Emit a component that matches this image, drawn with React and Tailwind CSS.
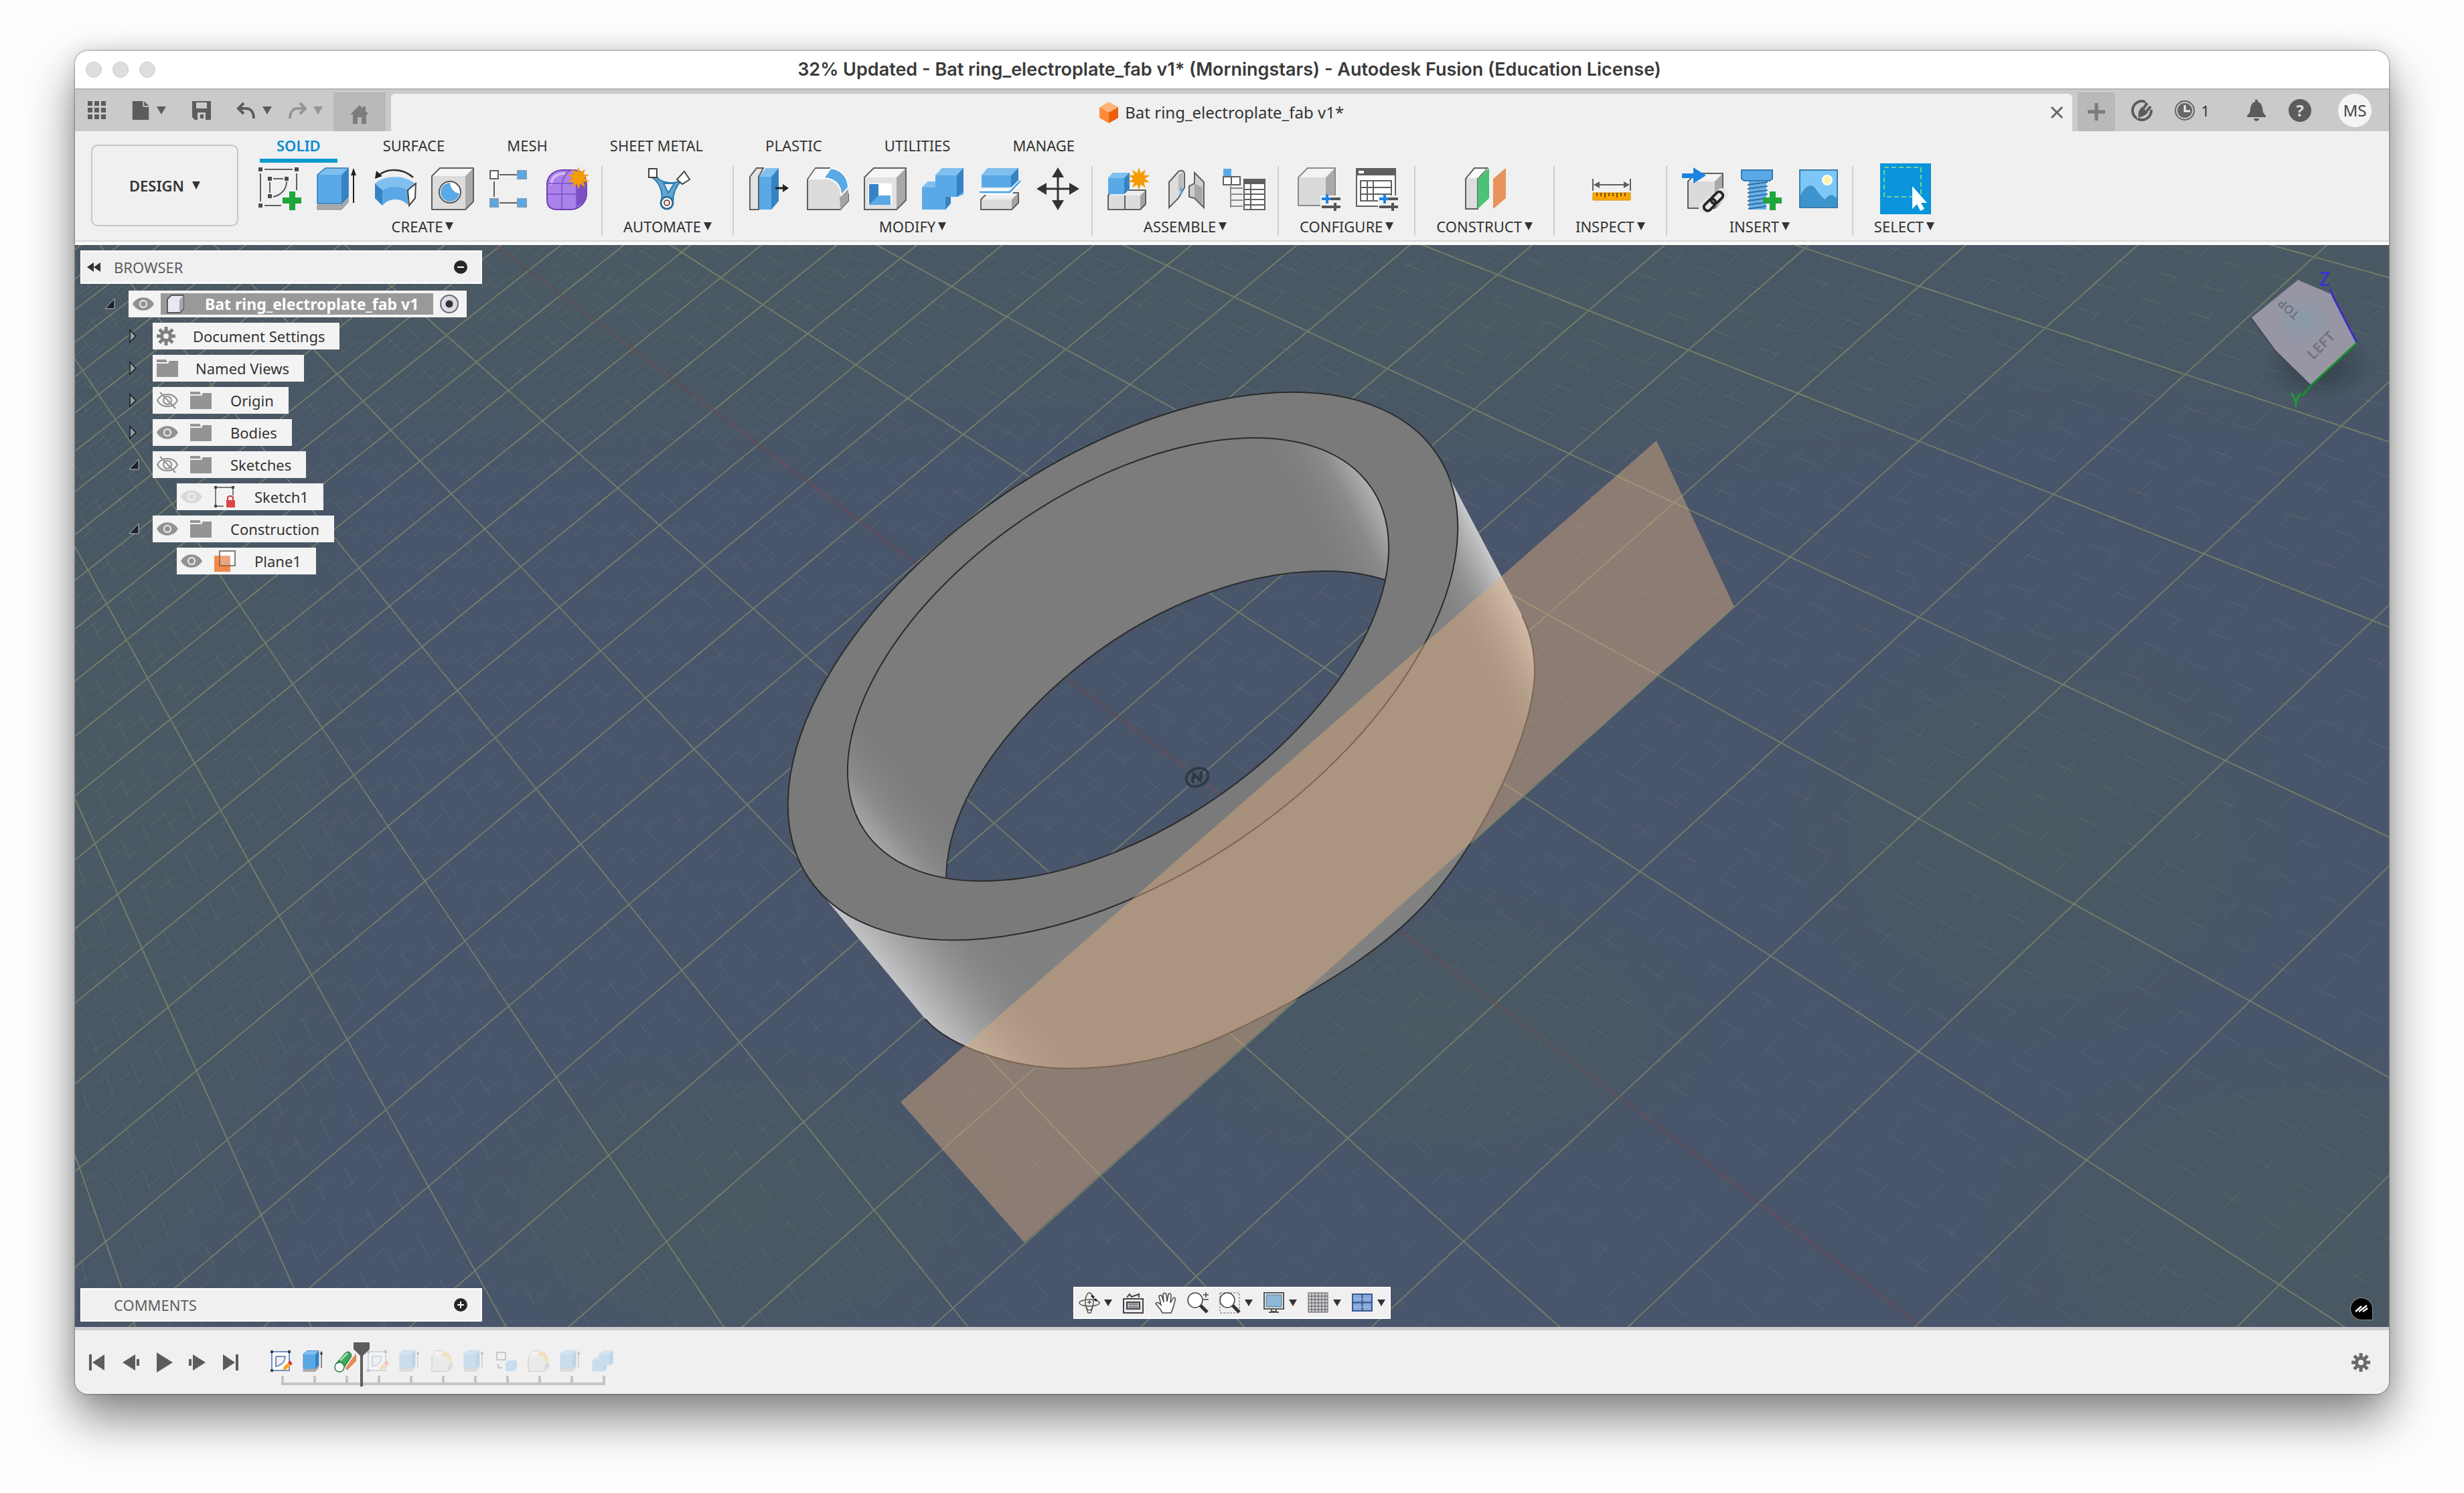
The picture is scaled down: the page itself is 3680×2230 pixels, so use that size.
import clsx from 'clsx';

const EDGE = '#5f5f5f';
const BLUE = '#5aa9e6';
const BLUE_TOP = '#7fc0ef';
const BLUE_SIDE = '#3583c4';

function Icon({ children, className = 'size-16', box = 64 }) {
  return (
    <svg viewBox={`0 0 ${box} ${box}`} className={clsx('block shrink-0 overflow-visible', className)} fill="none" aria-hidden="true">
      {children}
    </svg>
  );
}

function Caret({ className = 'w-3 h-3' }) {
  return (
    <svg viewBox="0 0 12 12" className={clsx('shrink-0', className)} preserveAspectRatio="none" aria-hidden="true">
      <path d="M0 0H12L6 12Z" fill="currentColor" />
    </svg>
  );
}

function Burst({ x, y, r, fill = '#f59c00' }) {
  const points = Array.from({ length: 20 }, (_, i) => {
    const a = (i * Math.PI) / 10 - Math.PI / 2;
    const d = i % 2 ? r * 0.52 : r;
    return `${(x + d * Math.cos(a)).toFixed(1)},${(y + d * Math.sin(a)).toFixed(1)}`;
  });
  return <polygon points={points.join(' ')} fill={fill} />;
}

const Box = ({ x = 0, y = 0, w, h, d = 12, front, top, side, edge = EDGE }) => (
  <g stroke={edge} strokeWidth="2" strokeLinejoin="round">
    <path d={`M${x} ${y + d}L${x + d} ${y}H${x + w}L${x + w - d} ${y + d}Z`} fill={top} stroke="none" />
    <path d={`M${x + w - d} ${y + d}L${x + w} ${y}V${y + h - d}L${x + w - d} ${y + h}Z`} fill={side} stroke="none" />
    <path d={`M${x} ${y + d}H${x + w - d}V${y + h}H${x}Z`} fill={front} stroke="none" />
    <path d={`M${x} ${y + d}L${x + d} ${y}H${x + w}V${y + h - d}L${x + w - d} ${y + h}H${x}Z`} />
  </g>
);

const GreenPlus = ({ x, y }) => <path d={`M${x - 4} ${y - 14}h9v9h9v9h-9v10h-9v-10h-10v-9h10z`} fill="#1ea63c" />;

/* ---------- ribbon icons ---------- */

const SketchIcon = ({ className }) => (
  <Icon className={className}>
    <g stroke={EDGE} strokeWidth="2">
      <path d="M9 3H51M3 9V51M57 9V34M9 57H34M22 17H37M17 22V38M42 21C42 32 35 41 22 44" />
    </g>
    <path d="M0 0h6v6H0zM54 0h6v6h-6zM0 54h6v6H0zM14 14h6v6h-6zM39 14h6v6h-6zM14 40h6v6h-6z" fill="#4b4b4b" />
    <GreenPlus x={50} y={50} />
  </Icon>
);

const ExtrudeIcon = ({ className }) => (
  <Icon className={className}>
    <path d="M2 56H38L48 44V52L38 63H2Z" fill="#a9a9a9" stroke="#8a8a8a" />
    <path d="M2 11L14 1H48L38 11Z" fill={BLUE_TOP} />
    <path d="M38 11L48 1V43L38 54Z" fill={BLUE_SIDE} />
    <path d="M2 11H38V54H2Z" fill={BLUE} />
    <path d="M2 11L14 1H48V43L38 54H2Z" stroke="#2f76b5" strokeWidth="1.5" />
    <path d="M56 10V53" stroke="#222" strokeWidth="2" />
    <path d="M56 1L60 12H52Z" fill="#222" />
  </Icon>
);

const RevolveIcon = () => (
  <Icon>
    <path d="M5 14C18 1 42 0 59 15" stroke="#333" strokeWidth="2.5" />
    <path d="M2 17L4 5L13 13Z" fill="#222" />
    <path d="M2 24C16 11 46 11 62 24L51 34C40 27 24 27 13 34Z" fill={BLUE_TOP} />
    <path d="M2 24L13 34V57L2 46Z" fill={BLUE_SIDE} />
    <path d="M13 34C24 27 40 27 51 34V56C40 45 24 45 13 57Z" fill={BLUE} />
    <path d="M51 34L63 24L62 46L53 57Z" fill="#fff" stroke="#444" strokeWidth="2" />
  </Icon>
);

const HoleIcon = () => (
  <Icon>
    <Box x={1} y={1} w={62} h={62} front="#dcdcdc" top="#f4f4f4" side="#aaa" />
    <circle cx="28" cy="37" r="16" fill="#fff" stroke="#555" strokeWidth="2" />
    <path d="M28 23A14 14 0 1 0 42 39A17 17 0 0 1 28 23Z" fill={BLUE} />
  </Icon>
);

const PatternIcon = () => (
  <Icon>
    <path d="M16 11H42M8 21V44M16 53H42" stroke={EDGE} strokeWidth="2" />
    <path d="M2 5h12v12H2z" fill="#fff" stroke={EDGE} strokeWidth="2" />
    <path d="M43 5h13v12H43zM2 47h12v12H2zM43 47h13v12H43z" fill={BLUE} stroke="#7d9db8" strokeWidth="2" />
  </Icon>
);

const FormIcon = () => (
  <Icon>
    <path d="M1 24C2 12 12 4 24 4H40C54 4 60 14 60 28V42C58 54 48 63 36 63H16C6 63 1 58 1 48Z" fill="#ab82ea" stroke="#6c3fb4" strokeWidth="2" />
    <path d="M45 24C52 22 58 18 59 16L60 42C58 50 52 56 46 58Z" fill="#7c4fc4" />
    <path d="M7 26C8 14 16 9 28 9" stroke="#d2b8f5" strokeWidth="4" />
    <path d="M23 24V62M2 40H46L60 34M3 24H45V60M24 24C24 16 30 8 34 5" stroke="#7a4dc4" strokeWidth="1.5" />
    <Burst x={48} y={16} r={17} />
  </Icon>
);

const AutomateIcon = () => (
  <Icon>
    <path d="M14 14C20 24 42 26 52 18C40 30 38 42 38 52A9 9 0 0 1 20 52C24 42 20 24 8 16Z" fill="#5fa6d2" stroke="#2b7cb0" strokeWidth="2" />
    <path d="M24 24H40L31 38Z" fill="#f0f0f0" stroke="#2b7cb0" strokeWidth="2" />
    <path d="M2 2h12v13H2z" fill="#fff" stroke="#444" strokeWidth="2" />
    <path d="M55 6L63 18L52 25L44 18Z" fill="#fff" stroke="#444" strokeWidth="2" />
    <circle cx="29" cy="53" r="9" fill="#fff" stroke="#2b6f9c" strokeWidth="3" />
    <circle cx="29" cy="53" r="4" stroke="#8a4a3a" strokeWidth="2" />
  </Icon>
);

const PressPullIcon = () => (
  <Icon>
    <path d="M2 14L12 1H22L15 14V63H2Z" fill="#e3e3e3" stroke={EDGE} strokeWidth="2" />
    <path d="M16 14L26 1H45V50L34 63H16Z" fill={BLUE} />
    <path d="M34 14L45 1V50L34 63Z" fill={BLUE_SIDE} />
    <path d="M16 14L26 1H45L34 14Z" fill={BLUE_TOP} />
    <path d="M40 31H54" stroke="#222" strokeWidth="3" />
    <path d="M60 31L51 25V37Z" fill="#222" />
  </Icon>
);

const FilletIcon = ({ className, accent = BLUE }) => (
  <Icon className={className}>
    <path d="M2 18L14 1H38L63 40V50L51 63H2Z" fill="#dcdcdc" stroke={EDGE} strokeWidth="2" />
    <path d="M50 42L63 32V50L51 63Z" fill="#a4a4a4" />
    <path d="M3 18L14 2H37L26 18Z" fill="#f7f7f7" />
    <path d="M26 16L37 1C54 3 63 16 63 30L52 42C52 27 44 17 26 16Z" fill={accent} stroke="#fff" strokeWidth="2" />
  </Icon>
);

const ShellIcon = () => (
  <Icon>
    <Box x={1} y={1} w={62} h={62} d={14} front="#e2e2e2" top="#f6f6f6" side="#a8a8a8" />
    <path d="M7 24H42V56H7Z" fill="#fff" />
    <path d="M8 25H22V44L8 56Z" fill={BLUE_SIDE} />
    <path d="M22 42H40V56H8Z" fill={BLUE} />
  </Icon>
);

const CombineIcon = ({ className }) => (
  <Icon className={className}>
    <path d="M21 12L31 1H63V40L54 44H44V53L36 63H1V30L10 21H21Z" fill={BLUE} />
    <path d="M21 12L31 1H63L53 12Z" fill={BLUE_TOP} />
    <path d="M53 12L63 1V36L53 44ZM36 44L44 44V54L36 63Z" fill={BLUE_SIDE} />
    <path d="M1 30L10 21H21V30Z" fill={BLUE_TOP} />
  </Icon>
);

const SplitIcon = () => (
  <Icon>
    <Box x={3} y={38} w={56} h={25} d={10} front="#dcdcdc" top="#eee" side="#a4a4a4" />
    <path d="M1 37H46L62 20" stroke="#fff" strokeWidth="8" />
    <path d="M1 37H46L62 20" stroke={BLUE} strokeWidth="3" />
    <path d="M4 12L13 1H59V19L48 30H4Z" fill={BLUE} />
    <path d="M4 12L13 1H59L48 12Z" fill={BLUE_TOP} />
    <path d="M48 12L59 1V19L48 30Z" fill={BLUE_SIDE} />
  </Icon>
);

const MoveIcon = () => (
  <Icon>
    <path d="M32 10V54M10 32H54" stroke="#333" strokeWidth="3" />
    <path d="M32 0L41 15H23ZM32 64L23 49H41ZM0 32L15 23V41ZM64 32L49 41V23Z" fill="#333" />
  </Icon>
);

const ComponentIcon = () => (
  <Icon>
    <Box x={1} y={34} w={56} h={29} d={8} front="#dcdcdc" top="#eee" side="#a4a4a4" />
    <path d="M26 42V63" stroke={EDGE} strokeWidth="2" />
    <path d="M1 16L8 8H33V32L25 40H1Z" fill={BLUE} />
    <path d="M1 16L8 8H33L25 16Z" fill={BLUE_TOP} />
    <path d="M25 16L33 8V32L25 40Z" fill={BLUE_SIDE} />
    <Burst x={47} y={17} r={17} />
  </Icon>
);

const JointIcon = () => (
  <Icon>
    <path d="M6 22L20 6C26 3 30 6 29 12V30L20 46L6 60Z" fill="#ddd" stroke={EDGE} strokeWidth="2" />
    <path d="M20 12L27 6V30L20 36Z" fill="#bcbcbc" />
    <path d="M36 28L44 24V8L58 22V60L44 46L36 44Z" fill="#cfcfcf" stroke={EDGE} strokeWidth="2" />
    <path d="M44 24L56 30V56L44 44Z" fill="#a8a8a8" />
    <path d="M24 30V40" stroke={BLUE} strokeWidth="3" />
  </Icon>
);

const BomIcon = () => (
  <Icon>
    <path d="M1 2h12v12H1z" fill={BLUE} />
    <path d="M1 14h12v12H1zM13 14h13v12H13z" fill="#fff" stroke={EDGE} strokeWidth="2" />
    <path d="M12 28V60M12 31H30M12 40H30M12 49H30M12 58H30" stroke="#8a8a8a" strokeWidth="2" />
    <path d="M32 18h31v45H32z" fill="#fff" stroke={EDGE} strokeWidth="2" />
    <path d="M32 18h31v7H32z" fill={EDGE} />
    <path d="M32 33H63M32 40H63M32 48H63M32 56H63M42 25V63" stroke={EDGE} strokeWidth="2" />
  </Icon>
);

const Sliders = () => (
  <g>
    <path d="M34 42h32v22H34z" fill="#f0f0f0" />
    <path d="M36 47H64M36 59H64" stroke="#555" strokeWidth="4" />
    <path d="M44 40V54" stroke="#1b84e0" strokeWidth="4" />
    <path d="M36 47H50" stroke="#1b84e0" strokeWidth="4" />
    <path d="M56 53V65" stroke="#555" strokeWidth="4" />
  </g>
);

const ConfigureIcon = () => (
  <Icon>
    <Box x={1} y={1} w={55} h={56} d={14} front="#dadada" top="#f3f3f3" side="#a9a9a9" edge="#8a8a8a" />
    <Sliders />
  </Icon>
);

const ConfigTableIcon = () => (
  <Icon>
    <path d="M2 2h58v56H2z" fill="#fff" stroke={EDGE} strokeWidth="2" />
    <path d="M2 1h58v11H2z" fill={EDGE} />
    <path d="M5 5h8v4H5z" fill="#fff" />
    <path d="M8 20h46v30H8zM8 30h46M8 40h46M18 20v30M27 20v30" stroke={EDGE} strokeWidth="2" />
    <Sliders />
  </Icon>
);

const PlaneIcon = () => (
  <Icon>
    <path d="M2 17L15 1H34L20 17V62H2Z" fill="#dedede" stroke={EDGE} strokeWidth="2" />
    <path d="M4 16L16 2H33L20 16Z" fill="#fbfbfb" />
    <path d="M20 17L37 1V46L20 62Z" fill="#4cc274" />
    <path d="M43 17L62 1V46L43 62Z" fill="#e8925c" />
  </Icon>
);

const MeasureIcon = () => (
  <Icon>
    <path d="M4 17V35M60 17V35M8 26H56" stroke={EDGE} strokeWidth="2" />
    <path d="M5 26L14 21V31ZM59 26L50 21V31Z" fill={EDGE} />
    <path d="M4 38H60V49H4Z" fill="#f9a800" stroke="#cf8a00" strokeWidth="1" />
    <path d="M10 38V43M16 38V43M22 38V45M28 38V43M34 38V43M40 38V45M46 38V43M52 38V43" stroke="#7a4c00" strokeWidth="2" />
  </Icon>
);

const InsertLinkIcon = () => (
  <Icon>
    <Box x={9} y={9} w={52} h={52} d={12} front="#dadada" top="#f3f3f3" side="#a9a9a9" />
    <path d="M0 9H17V0L36 12L17 24V16H0Z" fill="#1b84e0" />
    <path d="M34 60L60 40" stroke="#e6e6e6" strokeWidth="18" strokeLinecap="round" />
    <g transform="rotate(-45 47 50)" stroke="#262626" strokeWidth="4">
      <rect x="29" y="45" width="20" height="11" rx="5" />
      <rect x="44" y="45" width="20" height="11" rx="5" />
    </g>
  </Icon>
);

const FastenerIcon = () => (
  <Icon>
    <path d="M14 16H40V63H14Z" fill="#69b0e6" />
    <path d="M12 26L42 22M12 32L42 28M12 38L42 34M12 44L42 40M12 50L42 46M12 56L42 52M13 62L40 58" stroke="#2f6fa6" strokeWidth="2" />
    <path d="M3 4H49V17L45 20H7L3 17Z" fill={BLUE} stroke="#3579b0" strokeWidth="2" />
    <GreenPlus x={49} y={50} />
  </Icon>
);

const CanvasIcon = () => (
  <Icon>
    <path d="M4 4H60V60H4Z" fill="#7cc7f7" stroke="#3c7fae" strokeWidth="2" />
    <path d="M5 42C12 28 20 24 26 30C32 38 38 46 42 48C46 42 50 40 54 42L59 46V59H5Z" fill="#3d93cc" />
    <circle cx="45" cy="19" r="7" fill="#fff2a8" stroke="#fff" strokeWidth="2" />
  </Icon>
);

const SelectIcon = () => (
  <Icon className="size-[76px]" box={76}>
    <path d="M0 0H76V76H0Z" fill="#0a94dc" />
    <path d="M6 6H61V50H6Z" stroke="#6fd59a" strokeWidth="2" strokeDasharray="7 4" />
    <path d="M48 34V68L55 61L60 71L66 68L61 59H70Z" fill="#fff" />
  </Icon>
);

/* ---------- small icons ---------- */

const EyeIcon = ({ off, dim }) => (
  <Icon className="size-8" box={32}>
    {off ? (
      <g stroke="#8f8f8f" strokeWidth="2">
        <path d="M1 16C7 4 25 4 31 16C25 28 7 28 1 16ZM5 4L28 28" />
        <circle cx="16" cy="16" r="6" />
      </g>
    ) : (
      <g fill={dim ? '#d9d9d9' : '#929292'}>
        <path d="M0 16C7 3 25 3 32 16C25 29 7 29 0 16Z" />
        <circle cx="16" cy="16" r="6" fill="#f2f2f2" />
        <circle cx="16" cy="16" r="4" />
      </g>
    )}
  </Icon>
);

const FolderIcon = () => (
  <Icon className="size-8" box={32}>
    <path d="M0 3H14L16 7H0ZM0 9H17L19 5H32V29H0Z" fill="#949494" />
  </Icon>
);

const GearIcon = ({ className = 'size-7', color = '#7f7f7f' }) => (
  <Icon className={className} box={28}>
    <g stroke={color} strokeWidth="5">
      <path d="M14 0V28M0 14H28M4 4L24 24M24 4L4 24" />
    </g>
    <circle cx="14" cy="14" r="9" fill={color} />
    <circle cx="14" cy="14" r="4" fill="#f2f2f2" />
  </Icon>
);

const LockedSketchIcon = () => (
  <Icon className="size-8" box={32}>
    <path d="M4 2H26M2 4V28M28 4V14M4 30H14" stroke="#555" strokeWidth="1.5" />
    <path d="M0 0h4v4H0zM26 0h4v4h-4zM0 28h4v4H0z" fill="#444" />
    <path d="M20 21V18C20 14 28 14 28 18V21" stroke="#d43434" strokeWidth="2" />
    <path d="M18 21H31V32H18Z" fill="#e04545" />
  </Icon>
);

const PlaneNodeIcon = () => (
  <Icon className="size-8" box={32}>
    <path d="M8 1H31V23H8Z" fill="#fff" stroke="#555" strokeWidth="1.5" />
    <path d="M0 8H24V32H0Z" fill="#f08a4b" />
    <path d="M9 8H24V23H9Z" fill="#e9a67e" />
    <path d="M8 8V23H24" stroke="#8c5a3c" strokeWidth="1.5" />
  </Icon>
);

const PartIcon = () => (
  <Icon className="size-7" box={28}>
    <path d="M2 7L8 1H26V21L21 27H2Z" fill="#e8e8f2" stroke="#3a3a3a" strokeWidth="1.5" />
    <path d="M20 8L26 1V21L20 27Z" fill="#a5a5b3" />
  </Icon>
);

/* ---------- header ---------- */

function TitleBar() {
  return (
    <div className="flex h-14 items-center bg-white px-4">
      <div className="flex flex-1 gap-4">
        {['Close', 'Minimize', 'Zoom'].map((name) => (
          <button key={name} aria-label={name} className="size-6 rounded-full border border-[#c8c8c8] bg-[#dedede]" />
        ))}
      </div>
      <h1 className="pr-2 font-['Inter',sans-serif] text-[27px] leading-9 font-semibold whitespace-nowrap text-[#3a3a3a]">
        32% Updated - Bat ring_electroplate_fab v1* (Morningstars) - Autodesk Fusion (Education License)
      </h1>
      <div className="flex-1" />
    </div>
  );
}

function TabBar() {
  return (
    <div className="flex h-16 items-center border-t-2 border-[#b4b4b4] bg-[#cacaca] text-[#5c5c5c]">
      <div className="flex items-center pr-4 pl-[18px]">
        <button aria-label="Data panel" className="mr-9">
          <Icon className="size-[30px]" box={30}>
            <path d="M1 1h7v7H1zM11 1h7v7h-7zM21 1h7v7h-7zM1 11h7v7H1zM11 11h7v7h-7zM21 11h7v7h-7zM1 21h7v7H1zM11 21h7v7h-7zM21 21h7v7h-7z" fill="currentColor" />
          </Icon>
        </button>
        <button aria-label="File" className="mr-[38px] flex items-center gap-2.5">
          <Icon className="h-8 w-7" box={32}>
            <path d="M2 0H20V10H30V32H2ZM22 0L30 8H22Z" fill="currentColor" />
          </Icon>
          <Caret className="h-3 w-3.5" />
        </button>
        <button aria-label="Save" className="mr-[38px]">
          <Icon className="size-[30px]" box={30}>
            <path d="M1 1H29V29H5L1 25Z" fill="currentColor" />
            <path d="M7 3H23V12H7ZM9 18H21V29H9Z" fill="#cacaca" />
            <path d="M13 21h5v6h-5z" fill="currentColor" />
          </Icon>
        </button>
        <button aria-label="Undo" className="mr-6 flex items-center gap-2.5">
          <Icon className="size-7" box={28}>
            <path d="M10 3L2 11L10 19M3 11H13C20 11 25 16 25 26" stroke="currentColor" strokeWidth="4" />
          </Icon>
          <Caret className="h-3 w-3.5" />
        </button>
        <button aria-label="Redo" className="flex items-center gap-2.5 text-[#949494]">
          <Icon className="size-7" box={28}>
            <path d="M18 3L26 11L18 19M25 11H15C8 11 3 16 3 26" stroke="currentColor" strokeWidth="4" />
          </Icon>
          <Caret className="h-3 w-3.5" />
        </button>
      </div>
      <button aria-label="Home" className="mr-2 flex h-[58px] w-[78px] items-center justify-center self-end bg-[#b9b9b9] text-[#7c7c7c]">
        <Icon className="mt-2 size-7" box={28}>
          <path d="M14 0L19 5V2H23V9L28 14H24V28H17V18H11V28H4V14H0Z" fill="currentColor" />
        </Icon>
      </button>
      <div className="flex h-14 min-w-0 flex-1 items-center self-end rounded-t-md bg-[#f0f0f0] pr-3.5 text-[#333]">
        <div className="flex flex-1 items-center justify-center gap-2">
          <Icon className="size-8" box={32}>
            <path d="M16 0L30 8L16 16L2 8Z" fill="#ffb37a" />
            <path d="M2 8L16 16V32L2 24Z" fill="#ff8a3a" />
            <path d="M30 8L16 16V32L30 24Z" fill="#ec5f0c" />
          </Icon>
          <span className="text-2xl leading-8">Bat ring_electroplate_fab v1*</span>
        </div>
        <button aria-label="Close tab">
          <Icon className="size-[18px]" box={18}>
            <path d="M1 1L17 17M17 1L1 17" stroke="#666" strokeWidth="3" />
          </Icon>
        </button>
      </div>
      <button aria-label="New tab" className="mr-6 ml-2 flex h-[58px] w-14 items-center justify-center self-end bg-[#b9b9b9]">
        <Icon className="size-[26px]" box={26}>
          <path d="M13 0V26M0 13H26" stroke="#7a7a7a" strokeWidth="5" />
        </Icon>
      </button>
      <button aria-label="Extensions" className="mr-8">
        <Icon className="size-8" box={32}>
          <circle cx="16" cy="16" r="14" stroke="currentColor" strokeWidth="4" />
          <path d="M20 0L34 0V16L26 14Z" fill="#cacaca" />
          <path d="M9 29C8 20 9 14 15 9L26 19C22 25 16 26 12 25Z" fill="#cacaca" />
          <path d="M11 27C10 20 11 15 16 11L25 19C21 24 16 25 11 27Z" fill="currentColor" />
          <path d="M18 13L24 5M23 17L29 10" stroke="currentColor" strokeWidth="4" />
        </Icon>
      </button>
      <button aria-label="Job status" className="mr-[54px] flex items-center gap-2 text-[22px] leading-8 text-[#333]">
        <Icon className="size-8" box={32}>
          <circle cx="16" cy="16" r="14" stroke="#666" strokeWidth="2" />
          <circle cx="16" cy="16" r="11" fill="#666" />
          <path d="M16 8V17H24" stroke="#eee" strokeWidth="3" />
        </Icon>
        1
      </button>
      <button aria-label="Notifications" className="mr-8">
        <Icon className="size-8" box={32}>
          <path d="M14 0H18V3C25 5 25 13 26 19L30 24V26H2V24L6 19C7 13 7 5 14 3ZM12 28H20C20 33 12 33 12 28Z" fill="currentColor" />
        </Icon>
      </button>
      <button aria-label="Help" className="mr-10 flex size-[34px] items-center justify-center rounded-full bg-[#5c5c5c] text-2xl leading-8 font-bold text-[#dcdcdc]">
        ?
      </button>
      <button aria-label="Account" className="mr-[26px] flex size-[50px] items-center justify-center rounded-full bg-[#f4f4f4] text-2xl leading-8 text-[#444]">
        MS
      </button>
    </div>
  );
}

const WORKSPACE_TABS = ['SOLID', 'SURFACE', 'MESH', 'SHEET METAL', 'PLASTIC', 'UTILITIES', 'MANAGE'];

const GROUPS = [
  { label: 'CREATE', tools: { 'Create Sketch': SketchIcon, Extrude: ExtrudeIcon, Revolve: RevolveIcon, Hole: HoleIcon, Pattern: PatternIcon, 'Create Form': FormIcon } },
  { label: 'AUTOMATE', tools: { 'Automated Modeling': AutomateIcon } },
  { label: 'MODIFY', tools: { 'Press Pull': PressPullIcon, Fillet: FilletIcon, Shell: ShellIcon, Combine: CombineIcon, Split: SplitIcon, Move: MoveIcon } },
  { label: 'ASSEMBLE', tools: { 'New Component': ComponentIcon, Joint: JointIcon, 'Bill of Materials': BomIcon } },
  { label: 'CONFIGURE', tools: { Configure: ConfigureIcon, 'Configuration Table': ConfigTableIcon } },
  { label: 'CONSTRUCT', tools: { 'Offset Plane': PlaneIcon } },
  { label: 'INSPECT', tools: { Measure: MeasureIcon } },
  { label: 'INSERT', tools: { 'Insert Derive': InsertLinkIcon, 'Insert Fastener': FastenerIcon, Canvas: CanvasIcon } },
  { label: 'SELECT', tools: { Select: SelectIcon } },
];

function ToolGroup({ label, tools }) {
  return (
    <div className="flex flex-col items-center border-r-2 border-[#cfcfcf] last:border-r-0">
      <div className="flex h-[68px] items-center gap-[22px] pr-[18px] pl-[22px]">
        {Object.entries(tools).map(([name, Tool]) => (
          <button key={name} aria-label={name}>
            <Tool />
          </button>
        ))}
      </div>
      <button className="mt-2 flex h-7 items-center gap-1 px-[31px] text-[22px] leading-7 text-[#333]">
        {label}
        <Caret />
      </button>
    </div>
  );
}

function Ribbon() {
  return (
    <div className="bg-[#f0f0f0]">
      <div className="flex h-[163px]">
        <button className="mt-5 ml-6 flex h-[122px] w-[220px] shrink-0 items-center justify-center gap-3 rounded-[10px] border-2 border-[#c6c6c6] text-[22px] leading-7 font-semibold text-[#333]">
          DESIGN
          <Caret />
        </button>
        <div className="ml-2 flex flex-col">
          <div className="flex gap-[43px] pl-6">
            {WORKSPACE_TABS.map((tab, i) => (
              <button
                key={tab}
                className={clsx(
                  'h-[47px] border-b-[6px] px-[25px] text-[22px] leading-7',
                  i === 0 ? 'border-[#0a9ad0] font-semibold text-[#0a8ad0]' : 'border-transparent text-[#333]',
                )}
              >
                {tab}
              </button>
            ))}
          </div>
          <div className="mt-[5px] flex">
            {GROUPS.map((g) => (
              <ToolGroup key={g.label} {...g} />
            ))}
          </div>
        </div>
      </div>
      <div className="h-[7px] border-t-2 border-[#d6d6d6] bg-[#fafafa]" />
    </div>
  );
}

/* ---------- viewport ---------- */

// ground plane grid index -> viewport coordinates
function project(a, b) {
  const w = 1 - 0.05526 * a - 0.01136 * b;
  return [(3067 + 42.5 * a - 233.7 * b) / w, (738.4 + 43 * a + 173 * b) / w];
}

function segment(a1, b1, a2, b2) {
  const [x1, y1] = project(a1, b1);
  const [x2, y2] = project(a2, b2);
  return `M${x1.toFixed(1)} ${y1.toFixed(1)}L${x2.toFixed(1)} ${y2.toFixed(1)}`;
}

const range = (from, to, step = 1) => Array.from({ length: Math.round((to - from) / step) + 1 }, (_, i) => from + i * step);

const MAJOR = [
  ...range(-30, 8).map((a) => segment(a, -12, a, 14)),
  ...range(-12, 14).filter((b) => b !== 4).map((b) => segment(-30, b, 8, b)),
].join('');

const MINOR_A = range(-30, 8, 0.2).map((a) => segment(a, -12, a, 14)).join('');
const MINOR_B = range(-12, 14, 0.2).map((b) => segment(-30, b, 8, b)).join('');

const TINTS = [
  [150, 1150, 420, 1000],
  [900, 420, 1100, 300],
  [2300, 480, 1000, 260],
  [3400, 420, 500, 240],
  [3050, 1250, 380, 320],
  [2150, 1540, 420, 220],
  [1100, 1800, 420, 240],
  [3450, 1850, 500, 300],
];

function Ground() {
  return (
    <g>
      <path d="M0 300H3680V2100H0Z" fill="#49556a" />
      {TINTS.map(([cx, cy, rx, ry]) => (
        <ellipse key={`${cx}-${cy}`} cx={cx} cy={cy} rx={rx} ry={ry} fill="url(#tint)" />
      ))}
      <path d={MINOR_A} stroke="#8d9a8a" strokeOpacity="0.28" strokeWidth="1" strokeDasharray="30 46" />
      <path d={MINOR_B} stroke="#8d9a8a" strokeOpacity="0.28" strokeWidth="1" strokeDasharray="34 40" />
      <path d={MAJOR} stroke="#8a9a6c" strokeOpacity="0.55" strokeWidth="2" />
      <path d={segment(-30, 4, 8, 4)} stroke="#6b4a50" strokeOpacity="0.45" strokeWidth="4" />
    </g>
  );
}

function ViewCube() {
  return (
    <g>
      <ellipse cx="3462" cy="545" rx="80" ry="55" fill="url(#cubeShadow)" />
      <path d="M3432 418L3483 440L3520 512L3451 575L3398 523L3362 475Z" fill="#9896a5" />
      <circle cx="3440" cy="478" r="44" fill="url(#cubeGlow)" />
      <path d="M3480 432L3486 446L3520 512" stroke="#3b2fc4" strokeWidth="3" fill="none" />
      <path d="M3520 512L3451 576L3438 592" stroke="#17902c" strokeWidth="3" fill="none" />
      <path d="M3362 475L3398 524L3451 576" stroke="#3f4757" strokeWidth="2" fill="none" />
      <g className="font-['Noto_Sans',sans-serif]" textAnchor="middle" fontWeight="500">
        <text x="3472" y="427" fontSize="28" fill="#3b2fd4">Z</text>
        <text x="3429" y="608" fontSize="28" fill="#1d9c34">Y</text>
        <text fontSize="22" fontWeight="600" fill="#6f7180" transform="translate(3472 521) rotate(-45)">LEFT</text>
        <text fontSize="18" fontWeight="600" fill="#6f7180" transform="translate(3422 457) rotate(222)">TOP</text>
      </g>
    </g>
  );
}

const RIM = 'M2273 919C2286 945 2292 975 2292 1003C2292 1095 2211 1257 2135 1343C2058 1430 1939 1494 1836 1543C1758 1580 1675 1596 1597 1596C1510 1596 1416 1562 1382 1522';
const SIDE = `${RIM}L1228 1336L2164 712Z`;
const FAR_EDGE = 'M2068 866C2040 857 2010 853 1979 853C1840 853 1700 920 1600 1004C1500 1088 1415 1200 1413 1310';

const Bore = (props) => <ellipse rx="457" ry="253" transform="translate(1670 985) rotate(-34.1)" {...props} />;

function Ring() {
  return (
    <g>
      <clipPath id="bore"><Bore /></clipPath>
      <clipPath id="far"><path d={`${FAR_EDGE}L1413 1500H2200V900Z`} /></clipPath>
      <path d={SIDE} fill="#818181" />
      <path d={SIDE} fill="url(#sideLeft)" />
      <path d={SIDE} fill="url(#sideRight)" />
      <path d={RIM} stroke="#2b2b2b" strokeWidth="2" fill="none" />
      <ellipse rx="566" ry="312" transform="translate(1677 995) rotate(-34.1)" fill="#7a7a7a" stroke="#2b2b2b" strokeWidth="2" />
      <g clipPath="url(#bore)">
        <path d="M1200 600H2150V1400H1200Z" fill="#7c7c7c" />
        <path d="M1200 600H2150V1400H1200Z" fill="url(#boreLeft)" />
        <path d="M1200 600H2150V1400H1200Z" fill="url(#boreRight)" />
        <g clipPath="url(#far)">
          <Ground />
          <g transform="rotate(-25 1788 1161)">
            <ellipse cx="1788" cy="1161" rx="17" ry="13" fill="none" stroke="#2f3a47" strokeWidth="4" />
            <path d="M1778 1166L1785 1155L1790 1166L1798 1156" fill="none" stroke="#2f3a47" strokeWidth="5" />
          </g>
        </g>
        <path d={FAR_EDGE} stroke="#2b2b2b" strokeWidth="2" fill="none" />
      </g>
      <Bore fill="none" stroke="#2b2b2b" strokeWidth="2" />
    </g>
  );
}

function Scene() {
  return (
    <svg viewBox="112 366 3456 1616" preserveAspectRatio="xMidYMid slice" className="absolute inset-0 size-full" role="img" aria-label="Ring model with construction plane">
      <defs>
        <radialGradient id="tint">
          <stop offset="0" stopColor="#4a5a60" stopOpacity="0.8" />
          <stop offset="0.6" stopColor="#4a5a60" stopOpacity="0.5" />
          <stop offset="1" stopColor="#4a5a60" stopOpacity="0" />
        </radialGradient>
        <radialGradient id="cubeShadow">
          <stop offset="0.3" stopColor="#2c3a42" stopOpacity="0.6" />
          <stop offset="1" stopColor="#2c3a42" stopOpacity="0" />
        </radialGradient>
        <radialGradient id="cubeGlow">
          <stop offset="0" stopColor="#8a9aa8" />
          <stop offset="1" stopColor="#8a9aa8" stopOpacity="0" />
        </radialGradient>
        <linearGradient id="sideLeft" gradientUnits="userSpaceOnUse" x1="1300" y1="1432" x2="1430" y2="1326">
          <stop offset="0" stopColor="#c8c8cc" />
          <stop offset="0.5" stopColor="#989898" stopOpacity="0.8" />
          <stop offset="1" stopColor="#818181" stopOpacity="0" />
        </linearGradient>
        <linearGradient id="sideRight" gradientUnits="userSpaceOnUse" x1="2224" y1="813" x2="2120" y2="868">
          <stop offset="0" stopColor="#d0d0d4" />
          <stop offset="0.5" stopColor="#9a9a9a" stopOpacity="0.7" />
          <stop offset="1" stopColor="#818181" stopOpacity="0" />
        </linearGradient>
        <linearGradient id="boreLeft" gradientUnits="userSpaceOnUse" x1="1312" y1="1284" x2="1404" y2="1207">
          <stop offset="0" stopColor="#b0b0b0" />
          <stop offset="0.4" stopColor="#8c8c8c" />
          <stop offset="1" stopColor="#808080" stopOpacity="0" />
        </linearGradient>
        <linearGradient id="boreRight" gradientUnits="userSpaceOnUse" x1="2066" y1="754" x2="1963" y2="808">
          <stop offset="0" stopColor="#b4b4b4" />
          <stop offset="0.4" stopColor="#8a8a8a" />
          <stop offset="1" stopColor="#808080" stopOpacity="0" />
        </linearGradient>
      </defs>
      <Ground />
      <Ring />
      <path d="M2474 658L2590 906L1530 1856L1345 1646Z" fill="#deac7e" fillOpacity="0.45" />
      <ViewCube />
    </svg>
  );
}

const TREE = [
  { label: 'Document Settings', icon: GearIcon, state: 'closed' },
  { label: 'Named Views', icon: FolderIcon, state: 'closed' },
  { label: 'Origin', eye: 'off', icon: FolderIcon, state: 'closed' },
  { label: 'Bodies', eye: 'on', icon: FolderIcon, state: 'closed' },
  { label: 'Sketches', eye: 'off', icon: FolderIcon, state: 'open' },
  { label: 'Sketch1', eye: 'dim', icon: LockedSketchIcon, child: true },
  { label: 'Construction', eye: 'on', icon: FolderIcon, state: 'open' },
  { label: 'Plane1', eye: 'on', icon: PlaneNodeIcon, child: true },
];

function Expander({ state }) {
  return (
    <button aria-label={state === 'open' ? 'Collapse' : 'Expand'} className="flex w-9 shrink-0">
      <Icon className="size-5" box={20}>
        {state === 'open' ? (
          <path d="M15 2V17H1Z" fill="#1f1f28" stroke="#b5bdc5" strokeWidth="1" />
        ) : (
          <path d="M2 1L11 10L2 19Z" fill="#8f9ea4" stroke="#151c20" strokeWidth="1.5" />
        )}
      </Icon>
    </button>
  );
}

function BrowserPanel() {
  return (
    <section className="w-[600px] text-[22px] leading-7">
      <header className="flex h-[50px] items-center border-2 border-white bg-[#f0f0f0] pr-5 pl-2 text-[#5f5f5f]">
        <button aria-label="Collapse browser" className="mr-5">
          <Icon className="size-5" box={20}>
            <path d="M10 3V17L0 10ZM20 3V17L10 10Z" fill="#333" />
          </Icon>
        </button>
        <h2 className="flex-1">BROWSER</h2>
        <button aria-label="Browser options">
          <Icon className="size-5" box={20}>
            <circle cx="10" cy="10" r="10" fill="#262626" />
            <path d="M5 10H15" stroke="#fff" strokeWidth="2" />
          </Icon>
        </button>
      </header>
      <ul className="mt-2.5 flex flex-col gap-2">
        <li className="flex h-10 items-center pl-9">
          <Expander state="open" />
          <div className="flex h-10 items-center bg-[#f3f3f3] pr-3 pl-1.5">
            <button aria-label="Toggle visibility"><EyeIcon /></button>
            <span className="mx-2.5 flex h-8 items-center gap-[30px] bg-[#999] px-2 pr-[22px] text-[23px] font-bold text-white">
              <PartIcon />
              Bat ring_electroplate_fab v1
            </span>
            <input
              type="radio"
              aria-label="Activate component"
              defaultChecked
              className="size-7 appearance-none rounded-full border-2 border-[#6a6a74] bg-[radial-gradient(circle,#333_0_5px,#dcdce4_6px)]"
            />
          </div>
        </li>
        {TREE.map(({ label, eye, icon: Node, state, child }) => (
          <li key={label} className={clsx('flex h-10 items-center', child ? 'pl-36' : 'pl-[72px]')}>
            {state && <Expander state={state} />}
            <div className="flex h-10 items-center bg-[#f3f3f3] pr-[22px] pl-1.5 text-[#333]">
              {eye && (
                <button aria-label={`Toggle ${label}`} className="mr-[18px]">
                  <EyeIcon off={eye === 'off'} dim={eye === 'dim'} />
                </button>
              )}
              <Node />
              <span className={eye ? 'ml-7' : 'ml-[26px]'}>{label}</span>
            </div>
          </li>
        ))}
      </ul>
    </section>
  );
}

const Magnifier = () => (
  <g>
    <circle cx="12" cy="12" r="11" fill="#fff" stroke="#444" strokeWidth="1.5" />
    <path d="M20 20L30 30" stroke="#333" strokeWidth="5" />
  </g>
);

const NAV = [
  { name: 'Orbit', menu: true, draw: (
    <g stroke="#555" strokeWidth="1.5">
      <ellipse cx="16" cy="16" rx="15" ry="5" /><ellipse cx="16" cy="14" rx="6" ry="13" /><path d="M11 22L14 31H18L21 22M16 12V18M13 15H19" /><path d="M19 5L23 8M24 10L27 13" stroke="#222" strokeWidth="3" />
    </g>) },
  { name: 'Look At', draw: (
    <g stroke="#444" strokeWidth="2">
      <path d="M1 10H30V31H1Z" fill="#e8e8ee" /><path d="M6 15H25V25H6Z" fill="#b6b6c0" /><path d="M6 8L10 3L13 7L24 3V8" /><path d="M9 18H22M9 22H22" strokeWidth="1" />
    </g>) },
  { name: 'Pan', draw: <path d="M11 31C8 25 4 21 1 17C3 14 6 16 9 19L6 6C8 3 10 5 11 8L13 15L12 3C14 0 16 1 17 4L18 14L20 3C22 1 24 2 24 5L23 16L27 9C30 7 31 10 30 12C28 20 27 25 24 31Z" fill="#fff" stroke="#444" strokeWidth="1.5" /> },
  { name: 'Zoom', draw: <g><Magnifier /><path d="M24 4H32M28 0V8M24 11H32" stroke="#444" strokeWidth="1.5" /></g> },
  { name: 'Fit', menu: true, draw: <g><path d="M1 1H30V31H1Z" stroke="#666" strokeDasharray="3 2" /><Magnifier /></g> },
  { name: 'Display Settings', menu: true, draw: (
    <g><path d="M1 1H30V25H1Z" fill="#f4f4f4" stroke="#555" strokeWidth="2" /><path d="M4 4H27V22H4Z" fill="#8db8d8" stroke="#4d6f88" /><path d="M12 25V29H19V25M8 30H23" stroke="#555" strokeWidth="2" /></g>) },
  { name: 'Grid and Snaps', menu: true, draw: (
    <g><path d="M1 1H30V30H1Z" fill="#cfcfd6" /><path d="M1 1H30V30H1ZM6 1V30M11 1V30M16 1V30M21 1V30M26 1V30M1 6H30M1 11H30M1 16H30M1 21H30M1 26H30" stroke="#555" strokeWidth="1" /></g>) },
  { name: 'Viewports', menu: true, draw: (
    <g><path d="M1 3H30V28H1Z" fill="#86a9dc" stroke="#3b5a8c" strokeWidth="2" /><path d="M15.5 3V28M1 15.5H30" stroke="#33507f" strokeWidth="2" /><path d="M3 10H28M3 22H28" stroke="#a9c3ea" /></g>) },
];

function NavBar() {
  return (
    <nav aria-label="Navigation" className="flex h-12 items-center gap-4 border-2 border-white bg-[#f0f0f0] px-1.5 text-[#333]">
      {NAV.map(({ name, menu, draw }) => (
        <button key={name} aria-label={name} className="flex items-center gap-1.5">
          <Icon className="size-8" box={32}>{draw}</Icon>
          {menu && <Caret className="h-2.5 w-3" />}
        </button>
      ))}
    </nav>
  );
}

function Viewport() {
  return (
    <main className="relative flex min-h-0 flex-1 flex-col overflow-hidden bg-[#49556a]">
      <Scene />
      <div className="relative flex flex-1 flex-col justify-between p-2">
        <BrowserPanel />
        <div className="grid grid-cols-[1fr_auto_1fr] items-end">
          <section className="flex h-[50px] w-[600px] items-center border-2 border-white bg-[#f0f0f0] pr-5 pl-12 text-[22px] leading-7 text-[#5f5f5f]">
            <h2 className="flex-1">COMMENTS</h2>
            <button aria-label="Add comment">
              <Icon className="size-5" box={20}>
                <circle cx="10" cy="10" r="10" fill="#262626" />
                <path d="M5 10H15M10 5V15" stroke="#fff" strokeWidth="2" />
              </Icon>
            </button>
          </section>
          <div className="pb-1"><NavBar /></div>
          <button aria-label="Assistant" className="mr-4 mb-0.5 flex size-[34px] items-center justify-center justify-self-end rounded-full rounded-br-md border border-[#8a8f94] bg-black">
            <Icon className="size-6" box={24}>
              <path d="M3 16L12 8M8 16L20 7M14 16L21 11" stroke="#fff" strokeWidth="2.5" />
            </Icon>
          </button>
        </div>
      </div>
    </main>
  );
}

/* ---------- timeline ---------- */

const PLAYBACK = {
  'Go to start': 'M1 4H5V28H1ZM24 4V28L6 16Z',
  'Step back': 'M20 4V28L1 16ZM22 11H26V21H22Z',
  Play: 'M2 1L26 16L2 31Z',
  'Step forward': 'M6 4V28L25 16ZM0 11H4V21H0Z',
  'Go to end': 'M1 4V28L19 16ZM20 4H24V28H20Z',
};

const TimelineSketch = ({ className }) => (
  <Icon className={className} box={32}>
    <path d="M2 2H28V30H2ZM8 9H22M8 9V24C16 22 22 17 22 9" stroke="#4a6fa5" strokeWidth="1.5" fill="#fff" />
    <path d="M0 0h4v4H0zM26 0h4v4h-4zM0 28h4v4H0z" fill="#345" />
    <path d="M18 30L20 24L28 17L32 21L24 28Z" fill="#f5a623" />
    <path d="M26 18L29 15L33 20L30 22Z" fill="#d0354a" />
  </Icon>
);

const TimelinePlane = ({ className }) => (
  <Icon className={className} box={32}>
    <path d="M16 26L32 4V16L18 30Z" fill="#e28b53" />
    <path d="M2 20L16 4C20 0 26 4 24 10L12 28Z" fill="#3faa5c" stroke="#2c7d42" strokeWidth="1.5" />
    <path d="M8 15L19 4" stroke="#a4e0b4" strokeWidth="3" />
    <ellipse cx="7" cy="25" rx="7" ry="7" fill="#fff" stroke="#2c7d42" strokeWidth="1.5" />
  </Icon>
);

const TimelinePattern = ({ className }) => (
  <Icon className={className} box={32}>
    <path d="M2 3H15V14H2Z" stroke="#555" strokeWidth="2" />
    <path d="M4 20V26H10" stroke="#555" strokeWidth="2" />
    <path d="M15 19L19 15H32V27L28 31H15Z" fill={BLUE} />
  </Icon>
);

const TimelineFillet = ({ className }) => <FilletIcon className={className} accent="#f2b64d" />;

const FEATURES = [
  TimelineSketch, ExtrudeIcon, TimelinePlane, TimelineSketch, ExtrudeIcon, TimelineFillet,
  ExtrudeIcon, TimelinePattern, TimelineFillet, ExtrudeIcon, CombineIcon,
];

function Timeline() {
  return (
    <footer className="flex h-[100px] items-start border-t-[5px] border-[#cdced3] bg-[#f0f0f0] pr-7 pl-5 text-[#5c5c5c]">
      <div className="mt-8 flex gap-[18px]">
        {Object.entries(PLAYBACK).map(([name, d]) => (
          <button key={name} aria-label={name}>
            <Icon className="size-8" box={32}><path d={d} fill="currentColor" /></Icon>
          </button>
        ))}
      </div>
      <div className="relative mt-[30px] ml-10 flex flex-1">
        {FEATURES.map((Feature, i) => (
          <div key={i} className="flex w-12 flex-col">
            <button aria-label={`Feature ${i + 1}`} className={clsx(i > 2 && 'opacity-25')}>
              <Feature className="size-8" />
            </button>
            <div className={clsx('mt-1.5 ml-4 h-3.5 border-l-4 border-[#c4c4c4]', i < FEATURES.length - 1 && 'w-12 border-b-4')} />
          </div>
        ))}
        <svg viewBox="0 0 24 66" className="absolute -top-3 left-[124px] h-[66px] w-6" aria-hidden="true">
          <path d="M0 0H24V10L14 20V66H10V20L0 10Z" fill="#5c5c5c" />
        </svg>
      </div>
      <button aria-label="Timeline settings" className="mt-[34px]">
        <GearIcon color="#6a6a6a" />
      </button>
    </footer>
  );
}

export default function App() {
  return (
    <div className="flex h-screen bg-[#fdfdfd] px-28 pt-[76px] pb-[148px] font-['Noto_Sans',sans-serif]">
      <div className="flex min-w-0 flex-1 flex-col overflow-hidden rounded-[20px] shadow-[0_0_2px_1px_rgba(0,0,0,0.3),0_0_30px_rgba(0,0,0,0.12),0_36px_72px_rgba(0,0,0,0.48)]">
        <TitleBar />
        <TabBar />
        <Ribbon />
        <Viewport />
        <Timeline />
      </div>
    </div>
  );
}
